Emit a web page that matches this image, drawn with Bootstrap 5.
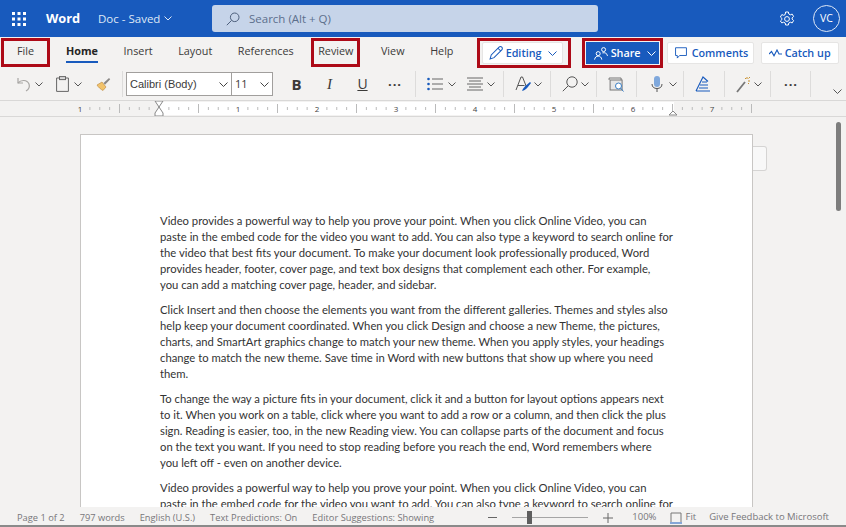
<!DOCTYPE html>
<html lang="en">
<head>
<meta charset="UTF-8">
<title>Word</title>
<link href="https://cdn.jsdelivr.net/npm/bootstrap@5.3.0/dist/css/bootstrap.min.css" rel="stylesheet">
<style>
    html, body { height: 100%; }
    body {
        display: flex; flex-direction: column; overflow: hidden;
        font-family: "Open Sans", "Noto Sans", sans-serif; font-size: 12px; color: #3b3a39; background: #f3f2f1;
    }
    svg { display: block; flex: none; }

    /* title bar */
    .title-bar { height: 37px; flex: none; background: #185abd; color: #fff; padding-left: 12px; }
    .app-name { font-size: 12.8px; font-weight: 700; margin-left: 20px; width: 52px; }
    .doc-name { font-size: 11.5px; color: #dfe8f6; width: 114px; }
    .search-box { width: 386px; height: 27px; background: #c6d4e9; border-radius: 3px; color: #5c6f8c; font-size: 11.5px; padding-left: 14px; gap: 9px; }
    .avatar { width: 27px; height: 27px; border: 1px solid #dfe8f6; border-radius: 50%; font-size: 10.5px; margin-left: 18px; margin-right: 6px; }

    /* tabs row */
    .tab-row { height: 33px; flex: none; padding-top: 1px; }
    .tab-list { gap: 25.6px; }
    .tab-item { font-size: 10.8px; line-height: 15px; padding-top: 5px; height: 29px; }
    .tab-on { font-weight: 700; color: #252423; position: relative; }
    .tab-on::after { content: ""; position: absolute; left: 0; right: 0; top: 23px; height: 2px; background: #185abd; }
    .red-box { border: 3px solid #ad0a17; }
    .file-box { width: 49px; margin-left: 1px; margin-right: 16px; text-align: center; padding-top: 2px; }
    .review-box { width: 49px; margin: 0 -5px 0 -8px; text-align: center; padding-top: 2px; }
    .help-tab { width: 46.5px; }
    .edit-box { width: 94px; height: 30px; padding: 1px 5px 1px 2px; }
    .share-box { width: 81px; height: 30px; margin-left: 11px; padding: 1px; }
    .white-btn { background: #fff; border: 1px solid #e6e5e4; border-radius: 2px; color: #185abd; font-weight: 600; font-size: 10.8px; height: 22px; }
    .edit-btn { width: 100%; padding-left: 6px; gap: 3px; }
    .share-btn { width: 100%; height: 100%; background: #185abd; color: #fff; font-weight: 600; font-size: 10.8px; gap: 3px; padding-left: 8px; }
    .share-btn .btn-chev { margin-left: 3px; }
    .edit-btn .btn-chev { margin-left: 3px; }
    .comment-btn { width: 87px; margin-left: 4px; margin-top: 4px; padding-left: 7px; gap: 5px; }
    .catch-btn { width: 78px; margin-left: 7px; margin-top: 4px; padding-left: 7px; gap: 3px; }

    /* ribbon */
    .ribbon { height: 30px; flex: none; padding: 0 0 2px 16px; position: relative; }
    .rb-sep { width: 1px; height: 26px; background: #dddcdb; flex: none; }
    .font-pick { height: 24px; border: 1px solid #a19f9d; background: #fff; font-family: "Liberation Sans", sans-serif; font-size: 11px; padding: 0 3px; justify-content: space-between; }
    .fp-name { width: 106px; }
    .fp-size { width: 42px; margin-left: -1px; font-family: "Open Sans", sans-serif; }
    .fmt-letter { width: 33px; text-align: center; font-size: 15px; line-height: 20px; color: #3b3a39; }
    .fmt-italic { font-family: "Liberation Serif", serif; font-style: italic; }
    .fmt-under { font-size: 14px; text-decoration: underline; }
    .dots { width: 20px; text-align: center; font-size: 13px; font-weight: 700; letter-spacing: 1px; line-height: 8px; }
    .ribbon-end { position: absolute; right: 4px; top: 19px; }

    /* left gaps in the ribbon, the icon groups are not evenly spaced */
    .l2 { margin-left: 2px; } .l3 { margin-left: 3px; } .l4 { margin-left: 4px; } .l5 { margin-left: 5px; }
    .l6 { margin-left: 6px; } .l7 { margin-left: 7px; } .l8 { margin-left: 8px; } .l9 { margin-left: 9px; }
    .l10 { margin-left: 10px; } .l11 { margin-left: 11px; } .l13 { margin-left: 13px; } .l14 { margin-left: 14px; }

    /* ruler */
    .ruler-row { height: 17px; flex: none; background: #f3f2f1; border-top: 1px solid #d9d8d7; border-bottom: 1px solid #d9d8d7; }
    .ruler-row text { font-family: "Open Sans", sans-serif; font-size: 8px; fill: #444; }

    /* document */
    .doc-area { flex: 1 1 auto; min-height: 0; overflow: hidden; position: relative; padding: 17px 0 0 80px; background: #f3f2f1; }
    .doc-page {
        width: 673px; height: 600px; background: #fff; border: 1px solid #c8c6c4; padding: 78px 0 0 79px; flex: none;
        font-family: Lato, sans-serif; font-size: 11.27px; line-height: 16px; color: #333; white-space: nowrap;
    }
    .doc-page p { margin-bottom: 9px; }
    .side-tab { width: 14px; height: 25px; margin-top: 12px; background: #f8f8f8; border: 1px solid #d5d4d3; border-left: 0; border-radius: 0 3px 3px 0; flex: none; }
    .scroll-thumb { position: absolute; left: 836px; top: 5px; width: 5px; height: 89px; background: #7d7d7d; border-radius: 3px; }

    /* status bar */
    .status-bar { height: 20px; flex: none; background: #f3f2f1; color: #77767a; font-size: 9.5px; padding: 3px 17px 0 17px; border-bottom: 2px solid #8a8a8a; }
    .status-bar span { white-space: nowrap; }
    .status-left { font-size: 9.3px; }
    .status-left > span { margin-right: 15px; }
    .zoom-track { width: 76px; height: 1px; background: #a5a5a5; position: relative; margin: 0 15px; }
    .zoom-knob { position: absolute; left: 15px; top: -6px; width: 5px; height: 13px; background: #5f5f5f; }
    .zoom-pct { margin: 0 14px 0 19px; }
    .fit-label { margin: 0 13px 0 3px; }
</style>
</head>
<body>

<div class="title-bar d-flex align-items-center">
    <svg width="14" height="14" viewBox="0 0 14 14" fill="#fff"><rect x="0" y="0" width="3" height="3"/><rect x="5.5" y="0" width="3" height="3"/><rect x="11" y="0" width="3" height="3"/><rect x="0" y="5.5" width="3" height="3"/><rect x="5.5" y="5.5" width="3" height="3"/><rect x="11" y="5.5" width="3" height="3"/><rect x="0" y="11" width="3" height="3"/><rect x="5.5" y="11" width="3" height="3"/><rect x="11" y="11" width="3" height="3"/></svg>
    <span class="app-name">Word</span>
    <span class="doc-name d-flex align-items-center gap-1">Doc - Saved <svg width="8" height="5" viewBox="0 0 8 5" fill="none" stroke="#dfe8f6"><path d="M.5.5 4 4 7.5.5"/></svg></span>
    <div class="search-box d-flex align-items-center">
        <svg width="14" height="14" viewBox="0 0 14 14" fill="none" stroke="#4d5f7c" stroke-width="1"><circle cx="8.7" cy="5.3" r="4.3"/><path d="M5.6 8.4.8 13.2"/></svg>
        <span>Search (Alt + Q)</span>
    </div>
    <div class="ms-auto d-flex align-items-center">
        <svg width="16" height="16" viewBox="0 0 16 16" fill="none" stroke="#fff" stroke-width="1"><circle cx="8" cy="8" r="2.4"/><path d="M6.6 1h2.8l.4 2 1.5.8 1.9-.7 1.4 2.4-1.500 1.400v1.200l1.500 1.400-1.400 2.400-1.900-.7-1.500.8-.4 2H6.600l-.4-2-1.500-.8-1.900.7L1.400 10l1.500-1.400V7.400L1.400 6l1.400-2.400 1.900.7 1.500-.8z"/></svg>
        <div class="avatar d-flex align-items-center justify-content-center">VC</div>
    </div>
</div>

<div class="tab-row d-flex align-items-start">
    <div class="tab-item red-box file-box">File</div>
    <div class="tab-list d-flex">
        <div class="tab-item tab-on">Home</div>
        <div class="tab-item">Insert</div>
        <div class="tab-item">Layout</div>
        <div class="tab-item">References</div>
        <div class="tab-item red-box review-box">Review</div>
        <div class="tab-item">View</div>
        <div class="tab-item help-tab">Help</div>
    </div>
    <div class="red-box edit-box">
        <div class="white-btn edit-btn d-flex align-items-center">
            <svg width="14" height="14" viewBox="0 0 15 15" fill="none" stroke="#185abd" stroke-width="1.1"><path d="M1.2 13.8 2.4 9.600 10.800 1.200a1.500 1.500 0 0 1 2.900 2.900L5.400 12.500z"/><path d="M9.600 2.400l2.900 2.900"/></svg>
            <span>Editing</span>
            <svg class="btn-chev" width="9" height="5" viewBox="0 0 9 5" fill="none" stroke="#185abd"><path d="M.5.500 4.500 4.500 8.500.500"/></svg>
        </div>
    </div>
    <div class="red-box share-box">
        <div class="share-btn d-flex align-items-center">
            <svg width="14" height="13" viewBox="0 0 14 13" fill="none" stroke="#fff"><circle cx="4.2" cy="6.6" r="2"/><path d="M.6 12.6c.3-2.300 1.700-3.500 3.600-3.500s3.300 1.200 3.600 3.500"/><circle cx="9.600" cy="2.600" r="2"/><path d="M8.400 5.900c2.700-.7 4.700.5 5.100 3"/></svg>
            <span>Share</span>
            <svg class="btn-chev" width="9" height="5" viewBox="0 0 9 5" fill="none" stroke="#fff"><path d="M.5.500 4.500 4.500 8.500.500"/></svg>
        </div>
    </div>
    <div class="white-btn comment-btn d-flex align-items-center">
        <svg width="12" height="12" viewBox="0 0 13 13" fill="none" stroke="#185abd"><path d="M.6.800h11.800v8.400H5L2.500 12V9.200H.6z"/></svg>
        <span>Comments</span>
    </div>
    <div class="white-btn catch-btn d-flex align-items-center">
        <svg width="13" height="8" viewBox="0 0 13 8" fill="none" stroke="#185abd" stroke-width="1.100"><path d="M0 5 2.500 2.500 5 6.800 8 1 10 5h3"/></svg>
        <span>Catch up</span>
    </div>
</div>

<div class="ribbon d-flex align-items-center">
    <svg width="16" height="15" viewBox="0 0 16 15" fill="none" stroke="#a8a6a4" stroke-width="1.200"><path d="M2 1v5h5"/><path d="M2 6c3-3.500 9-3.500 11 1 1 3-.5 5.500-3 7"/></svg>
    <svg class="l3" width="8" height="5" viewBox="0 0 8 5" fill="none" stroke="#555"><path d="M.5.500 4 4 7.500.500"/></svg>
    <svg class="l13" width="13" height="16" viewBox="0 0 13 16" fill="none" stroke="#666"><path d="M3.500 2H.6v13.400h11.800V2H9.500"/><rect x="3.500" y=".6" width="6" height="3" fill="#d8d8d8"/></svg>
    <svg class="l5" width="8" height="5" viewBox="0 0 8 5" fill="none" stroke="#555"><path d="M.5.500 4 4 7.500.500"/></svg>
    <svg class="l14" width="15" height="14" viewBox="0 0 15 14"><path d="M1 8l5-3 4 5-3 3.500C5 12.500 2 10 1 8z" fill="#f2c36b" stroke="#b9853a" stroke-width=".6"/><path d="M7.500 6 13 1l1.200 1.300L9 7.700z" fill="#8a8886"/></svg>
    <div class="rb-sep l11"></div>
    <div class="font-pick fp-name l3 d-flex align-items-center">
        <span>Calibri (Body)</span>
        <svg width="9" height="5" viewBox="0 0 9 5" fill="none" stroke="#444"><path d="M.5.500 4.500 4.500 8.500.500"/></svg>
    </div>
    <div class="font-pick fp-size d-flex align-items-center">
        <span>11</span>
        <svg width="9" height="5" viewBox="0 0 9 5" fill="none" stroke="#444"><path d="M.5.500 4.500 4.500 8.500.500"/></svg>
    </div>
    <div class="fmt-letter l7 fw-bold">B</div>
    <div class="fmt-letter fmt-italic">I</div>
    <div class="fmt-letter fmt-under">U</div>
    <div class="dots l6">···</div>
    <div class="rb-sep l10"></div>
    <svg class="l11" width="16" height="14" viewBox="0 0 16 14" fill="none"><path d="M5 2h11M5 7h11M5 12h11" stroke="#666"/><circle cx="1.500" cy="2" r="1.300" fill="#185abd"/><circle cx="1.500" cy="7" r="1.300" fill="#185abd"/><circle cx="1.500" cy="12" r="1.300" fill="#185abd"/></svg>
    <svg class="l5" width="8" height="5" viewBox="0 0 8 5" fill="none" stroke="#555"><path d="M.5.500 4 4 7.500.500"/></svg>
    <svg class="l11" width="16" height="14" viewBox="0 0 16 14" fill="none" stroke="#666"><path d="M0 1h16M2 4h12M0 7h16M2 10h12M0 13h16"/></svg>
    <svg class="l4" width="8" height="5" viewBox="0 0 8 5" fill="none" stroke="#555"><path d="M.5.500 4 4 7.500.500"/></svg>
    <div class="rb-sep l8"></div>
    <svg class="l11" width="17" height="16" viewBox="0 0 17 16" fill="none"><path d="M1 14 6 1h1.500l4 10M3 9.500h6.500" stroke="#555"/><path d="M7 15c1-3 3-5 8-9l1 1c-3 4-5 7-9 8z" fill="#185abd"/></svg>
    <svg class="l2" width="8" height="5" viewBox="0 0 8 5" fill="none" stroke="#555"><path d="M.5.500 4 4 7.500.500"/></svg>
    <div class="rb-sep l8"></div>
    <svg class="l11" width="16" height="16" viewBox="0 0 16 16" fill="none" stroke="#555"><circle cx="10" cy="6" r="5.200"/><path d="M6.200 9.800.8 15.200"/></svg>
    <svg class="l3" width="8" height="5" viewBox="0 0 8 5" fill="none" stroke="#555"><path d="M.5.500 4 4 7.500.500"/></svg>
    <div class="rb-sep l7"></div>
    <svg class="l11" width="17" height="15" viewBox="0 0 16 15" fill="none" stroke="#777"><path d="M.6 3V1h12v2" /><rect x="1.600" y="3" width="12" height="10" fill="#e6e6e6"/><circle cx="10" cy="9" r="3" stroke="#3b7fc4" fill="#fff"/><path d="M12 11l3 3.500" stroke="#3b7fc4"/></svg>
    <div class="rb-sep l11"></div>
    <svg class="l14" width="12" height="17" viewBox="0 0 12 17" fill="none"><rect x="3" y="0" width="6" height="11" rx="3" fill="#7fa8dc"/><path d="M1 8c0 3 2 4.500 5 4.500S11 11 11 8M6 12.500V16" stroke="#555"/></svg>
    <svg class="l6" width="8" height="5" viewBox="0 0 8 5" fill="none" stroke="#555"><path d="M.5.500 4 4 7.500.500"/></svg>
    <div class="rb-sep l6"></div>
    <svg class="l11" width="16" height="16" viewBox="0 0 16 16" fill="none" stroke="#185abd" stroke-width="1.100"><path d="M1 15 8 1l5 4.500M1 15h14M5 9h8M4 12h9M7 6h5"/></svg>
    <div class="rb-sep l13"></div>
    <svg class="l11" width="15" height="17" viewBox="0 0 15 17" fill="none"><path d="M1 16 9 6" stroke="#777" stroke-width="1.800"/><path d="M11 1v2M14 5h-2M9 2l1 1M14 1l-1.500 1.500M13 8l-1-1" stroke="#c8912f"/></svg>
    <svg class="l3" width="8" height="5" viewBox="0 0 8 5" fill="none" stroke="#555"><path d="M.5.500 4 4 7.500.500"/></svg>
    <div class="rb-sep l8"></div>
    <div class="dots l10">···</div>
    <div class="rb-sep l9"></div>
    <svg class="ribbon-end" width="9" height="5" viewBox="0 0 9 5" fill="none" stroke="#555"><path d="M.5.500 4.500 4.500 8.500.500"/></svg>
</div>

<div class="ruler-row">
    <svg id="ruler" width="846" height="15" viewBox="0 0 846 15"></svg>
</div>

<div class="doc-area d-flex align-items-start">
    <div class="doc-page">
        <p>Video provides a powerful way to help you prove your point. When you click Online Video, you can<br>paste in the embed code for the video you want to add. You can also type a keyword to search online for<br>the video that best fits your document. To make your document look professionally produced, Word<br>provides header, footer, cover page, and text box designs that complement each other. For example,<br>you can add a matching cover page, header, and sidebar.</p>
        <p>Click Insert and then choose the elements you want from the different galleries. Themes and styles also<br>help keep your document coordinated. When you click Design and choose a new Theme, the pictures,<br>charts, and SmartArt graphics change to match your new theme. When you apply styles, your headings<br>change to match the new theme. Save time in Word with new buttons that show up where you need<br>them.</p>
        <p>To change the way a picture fits in your document, click it and a button for layout options appears next<br>to it. When you work on a table, click where you want to add a row or a column, and then click the plus<br>sign. Reading is easier, too, in the new Reading view. You can collapse parts of the document and focus<br>on the text you want. If you need to stop reading before you reach the end, Word remembers where<br>you left off - even on another device.</p>
        <p>Video provides a powerful way to help you prove your point. When you click Online Video, you can<br>paste in the embed code for the video you want to add. You can also type a keyword to search online for</p>
    </div>
    <div class="side-tab"></div>
    <div class="scroll-thumb"></div>
</div>

<div class="status-bar d-flex align-items-center">
    <div class="status-left d-flex">
        <span>Page 1 of 2</span>
        <span>797 words</span>
        <span>English (U.S.)</span>
        <span>Text Predictions: On</span>
        <span>Editor Suggestions: Showing</span>
    </div>
    <div class="ms-auto d-flex align-items-center">
        <svg width="9" height="1" viewBox="0 0 9 1"><rect width="9" height="1" fill="#666"/></svg>
        <div class="zoom-track"><div class="zoom-knob"></div></div>
        <svg width="10" height="10" viewBox="0 0 10 10"><path d="M5 0v10M0 5h10" stroke="#666"/></svg>
        <span class="zoom-pct">100%</span>
        <svg width="12" height="12" viewBox="0 0 12 12" fill="none"><path d="M1 10V1h10v9" stroke="#777"/><path d="M0 11h12" stroke="#185abd"/></svg>
        <span class="fit-label">Fit</span>
        <span>Give Feedback to Microsoft</span>
    </div>
</div>

<script>
    // ruler: white part between margins, one tick every 1/8 inch (79px per inch)
    const ruler = document.getElementById('ruler');
    const zero = 159, inch = 79;
    let out = '<rect x="159" y="1" width="515" height="13" fill="#fff"/>';
    for (let i = -8; i <= 60; i++) {
        const x = zero + i * inch / 8;
        if (i % 8 === 0 && i !== 0) {
            out += `<text x="${x}" y="11" text-anchor="middle">${Math.abs(i / 8)}</text>`;
        } else if (i % 4 === 0) {
            out += `<path d="M${x} 3v9" stroke="#bbb"/>`;
        } else {
            out += `<path d="M${x} 6v3" stroke="#bbb"/>`;
        }
    }
    out += '<path d="M155 0h8l-4 6 4 6v3h-8v-3l4-6z" fill="#fff" stroke="#888"/>';
    out += '<path d="M669 14l4-4 4 4z" fill="#fff" stroke="#888"/>';
    ruler.innerHTML = out;
</script>
<script src="https://cdn.jsdelivr.net/npm/bootstrap@5.3.0/dist/js/bootstrap.bundle.min.js"></script>
</body>
</html>
